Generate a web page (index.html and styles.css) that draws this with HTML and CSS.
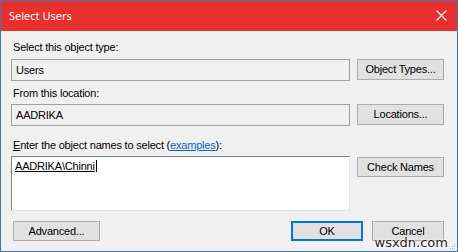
FILE: index.html
```html
<!DOCTYPE html>
<html lang="en">
<head>
  <meta charset="UTF-8">
  <title>Select Users</title>
  <link rel="stylesheet" href="styles.css">
</head>
<body>
  <div class="window">
    <div class="titlebar">
      <span class="title">Select Users</span>
      <svg class="close" width="11" height="11" viewBox="0 0 11 11">
        <path d="M0.5 0.5 L10.5 10.5 M10.5 0.5 L0.5 10.5" stroke="#fff" stroke-width="1.1" fill="none"/>
      </svg>
    </div>

    <div class="content">
      <div class="label">Select this object type:</div>
      <div class="row">
        <div class="field">Users</div>
        <div class="btn">Object Types...</div>
      </div>

      <div class="label second">From this location:</div>
      <div class="row">
        <div class="field">AADRIKA</div>
        <div class="btn">Locations...</div>
      </div>

      <div class="label third"><u>E</u>nter the object names to select (<a href="#">examples</a>):</div>
      <div class="row top">
        <div class="textarea"><span class="entry">AADRIKA\Chinni</span></div>
        <div class="btn check">Check Names</div>
      </div>

      <div class="footer">
        <div class="btn advanced">Advanced...</div>
        <div class="spacer"></div>
        <div class="btn small default">OK</div>
        <div class="btn small">Cancel</div>
      </div>
    </div>

    <div class="watermark">wsxdn.com</div>
    <svg class="grip" width="7" height="7" viewBox="0 0 7 7">
      <rect x="5" y="1" width="1" height="1" fill="#b8b8b8"/>
      <rect x="3" y="3" width="1" height="1" fill="#b8b8b8"/>
      <rect x="5" y="3" width="1" height="1" fill="#b8b8b8"/>
      <rect x="1" y="5" width="1" height="1" fill="#b8b8b8"/>
      <rect x="3" y="5" width="1" height="1" fill="#b8b8b8"/>
      <rect x="5" y="5" width="1" height="1" fill="#b8b8b8"/>
    </svg>
  </div>
</body>
</html>
```

FILE: styles.css
```css
* { box-sizing: border-box; }
body { margin: 0; font-family: "Liberation Sans", Arial, sans-serif; font-size: 11px; letter-spacing: -0.2px; color: #000; }

.window {
  position: relative;
  width: 458px;
  height: 252px;
  border: 1px solid #4274b4;
  background: #f0f0f0;
  overflow: hidden;
}

.titlebar {
  height: 30px;
  background: #e8302f;
  color: #fff;
  display: flex;
  align-items: center;
  justify-content: space-between;
  padding: 0 10px 1px 8px;
}
.title { font-family: "Noto Sans", "Open Sans", sans-serif; font-size: 11px; letter-spacing: 0; }

.content { padding: 10px 13px 0 10px; }

.label { height: 13px; line-height: 13px; margin-bottom: 5px; padding-left: 2px; }
.label.second { margin-top: 6px; margin-bottom: 4px; }
.label.third { margin-top: 13px; margin-bottom: 4px; }
.label a { color: #0066cc; }

.row {
  display: grid;
  grid-template-columns: 339px 87px;
  column-gap: 7px;
  align-items: stretch;
}
.row.top { align-items: start; }

.field {
  height: 22px;
  line-height: 20px;
  border: 1px solid #a0a0a0;
  background: #f0f0f0;
  padding-left: 4px;
}

.btn {
  height: 21px;
  line-height: 19px;
  text-align: center;
  background: #e1e1e1;
  border: 1px solid #adadad;
}
.btn.check { margin-top: 1px; height: 20px; line-height: 18px; }

.textarea {
  height: 55px;
  background: #fff;
  border-top: 1px solid #828282;
  border-left: 1px solid #828282;
  border-right: 1px solid #e3e3e3;
  border-bottom: 1px solid #e3e3e3;
  padding: 3px 0 0 3px;
}
.entry {
  text-decoration: underline;
  border-right: 1px solid #000;
  padding-right: 1px;
  line-height: 13px;
}

.footer {
  display: flex;
  gap: 9px;
  margin-top: 10px;
}
.spacer { flex: 1; }
.advanced { width: 87px; margin-left: 2px; height: 20px; line-height: 18px; }
.small { width: 72px; height: 20px; line-height: 18px; }
.default { border: 2px solid #0078d7; line-height: 16px; }

.watermark {
  position: absolute;
  right: 9px;
  bottom: 1px;
  font-family: "DejaVu Sans", sans-serif;
  font-size: 13px;
  letter-spacing: 0;
  color: #222;
  text-shadow: 0 0 2px #fff, 0 0 2px #fff, 0 0 1px #fff;
}
.grip { position: absolute; right: 1px; bottom: 1px; }
```
